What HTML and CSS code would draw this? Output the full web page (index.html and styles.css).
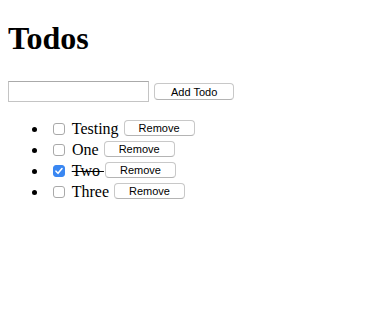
FILE: index.html
```html
<!DOCTYPE html>
<html lang="en">
<head>
    <meta charset="UTF-8">
    <title>Todos</title>
    <link rel="stylesheet" href="styles.css">
</head>
<body>
    <h1>Todos</h1>
    <div class="add-form">
        <input type="text" id="new-todo">
        <button>Add Todo</button>
    </div>
    <ul class="todo-list">
        <li><input type="checkbox"> <span class="todo-text">Testing</span> <button>Remove</button></li>
        <li><input type="checkbox"> <span class="todo-text">One</span> <button>Remove</button></li>
        <li><input type="checkbox" checked> <span class="todo-text done">Two </span><button>Remove</button></li>
        <li><input type="checkbox"> <span class="todo-text">Three</span> <button>Remove</button></li>
    </ul>
</body>
</html>
```

FILE: styles.css
```css
body {
    margin: 0 8px 8px;
    font-family: "Liberation Serif", "Times New Roman", serif;
    font-size: 16px;
    color: #000;
    background: #fff;
}
h1 {
    font-size: 32px;
    line-height: 37px;
    margin: 0;
    padding: 20px 0 23px;
}
.add-form {
    display: flex;
    align-items: center;
    gap: 5px;
    height: 23px;
}
.add-form input {
    box-sizing: border-box;
    width: 141px;
    height: 21px;
    margin: 0;
    border: 1px solid #c4c4c4;
    border-top-color: #aaa;
    padding: 0 3px;
    font-size: 13px;
}
button {
    box-sizing: border-box;
    height: 17px;
    margin: 0;
    padding: 0 16px;
    font-family: "Liberation Sans", Arial, sans-serif;
    font-size: 11px;
    color: #000;
    background: #fff;
    border: 1px solid #c8c8c8;
    border-bottom-color: #b4b4b4;
    border-radius: 4px;
}
.todo-list {
    margin: 15px 0 0;
    padding-left: 40px;
}
.todo-list li {
    line-height: 21px;
}
.todo-list button {
    height: 16px;
    padding: 0 14px;
    margin-left: 1px;
    vertical-align: 2px;
}
.todo-list input[type="checkbox"] {
    appearance: none;
    box-sizing: border-box;
    width: 12px;
    height: 12px;
    margin: 0 3px 0 5px;
    border: 1px solid #a9a9a9;
    border-radius: 3px;
    background: #fff;
    vertical-align: -1px;
}
.todo-list input[type="checkbox"]:checked {
    border-color: #3a87f2;
    background: #3a87f2 url("data:image/svg+xml,%3Csvg xmlns='http://www.w3.org/2000/svg' viewBox='0 0 12 12'%3E%3Cpath d='M3 6.2l2 2.1 4-4.8' fill='none' stroke='%23fff' stroke-width='1.6' stroke-linecap='round' stroke-linejoin='round'/%3E%3C/svg%3E") center / 12px 12px no-repeat;
}
.done {
    text-decoration: line-through;
}
```
